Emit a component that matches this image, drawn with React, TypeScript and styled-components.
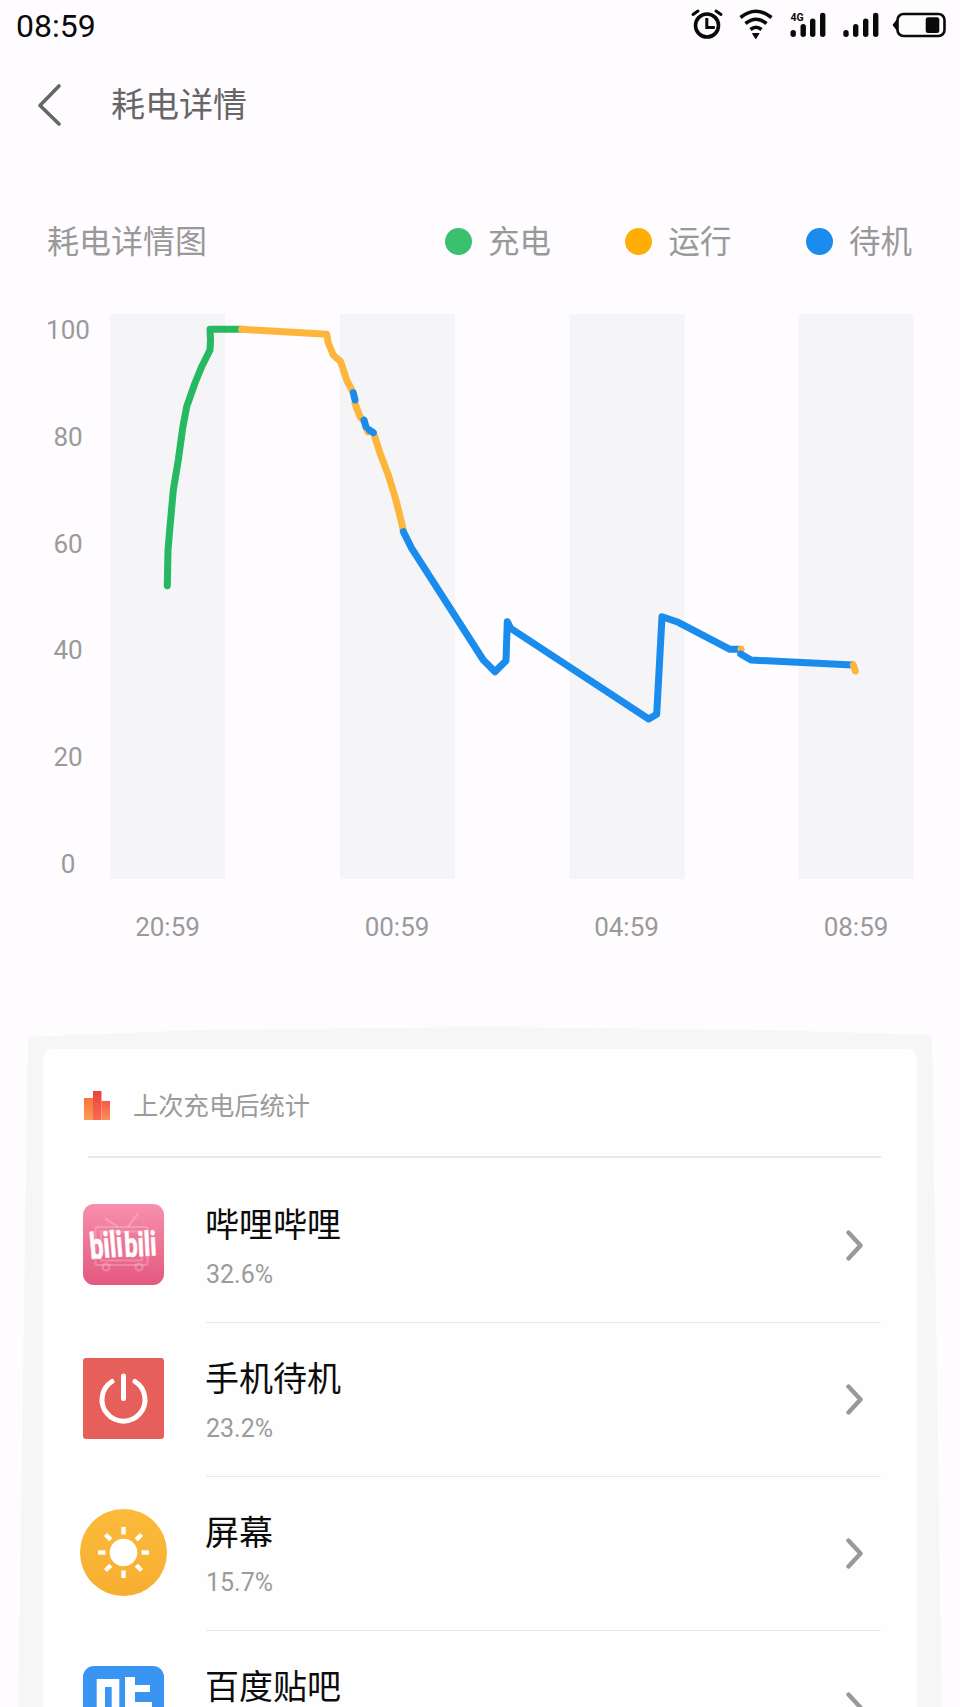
import React from 'react';
import styled, { createGlobalStyle } from 'styled-components';

const GREEN = '#27b862';
const ORANGE = '#fdb53c';
const BLUE = '#1a8ced';

const GlobalStyle = createGlobalStyle`
  html, body {
    margin: 0;
    padding: 0;
    background: #fefcfe;
    font-family: Roboto, "Noto Sans CJK SC", sans-serif;
  }
`;

const Page = styled.div`
  width: 960px;
  height: 1707px;
  overflow: hidden;
  background: #fefcfe;
`;

const StatusBar = styled.div`
  height: 50px;
  display: flex;
  align-items: center;
  justify-content: space-between;
  padding-left: 16px;
`;

const Clock = styled.span`
  font-size: 32px;
  line-height: 50px;
  padding-top: 1px;
  color: #0a0a0a;
`;

const TitleBar = styled.div`
  height: 110px;
  display: flex;
  align-items: center;
  padding-left: 36px;
`;

const BackIcon = styled.svg`
  width: 28px;
  height: 44px;
`;

const Title = styled.h1`
  margin: 0 0 6px 47px;
  font-size: 34px;
  font-weight: 400;
  color: #666;
`;

const ChartHeader = styled.div`
  height: 50px;
  margin-top: 56px;
  padding: 0 48px 0 47px;
  display: flex;
  align-items: center;
  justify-content: space-between;
`;

const ChartTitle = styled.span`
  font-size: 32px;
  margin-bottom: 4px;
  color: #999;
`;

const Legend = styled.div`
  display: flex;
  gap: 74.5px;
`;

const LegendItem = styled.div`
  display: flex;
  align-items: center;
  gap: 16px;
`;

const LegendText = styled.span`
  font-size: 31.5px;
  margin-bottom: 4px;
  color: #999;
`;

const Dot = styled.i<{ $color: string }>`
  width: 27px;
  height: 27px;
  border-radius: 50%;
  background: ${(p) => p.$color};
`;

const ChartRow = styled.div`
  margin-top: 48px;
  height: 565px;
  display: flex;
  padding-left: 40px;
`;

const YAxis = styled.div`
  width: 56px;
  margin: 1px 14px 0 0;
  display: flex;
  flex-direction: column;
  justify-content: space-between;
  align-items: center;
`;

const AxisLabel = styled.span`
  font-size: 26px;
  line-height: 30px;
  color: #9a9a9a;
`;

const Plot = styled.svg`
  width: 804px;
  height: 565px;
  display: block;
`;

const XAxis = styled.div`
  margin-top: 33px;
  padding-left: 110px;
  display: flex;
  gap: 114.5px;
`;

const XLabel = styled(AxisLabel)`
  width: 115px;
  text-align: center;
`;

const Halo = styled.section`
  margin-top: 85px;
  height: 680px;
  padding-top: 22px;
  background: #f6f6f6;
  clip-path: polygon(28px 10px, 200px 3px, 480px 0, 760px 3px, 932px 8px, 942px 100%, 18px 100%);
`;

const Card = styled.div`
  margin: 0 43px;
  height: 700px;
  background: #fefefe;
  border-radius: 11px 11px 0 0;
`;

const CardHeader = styled.div`
  height: 101px;
  padding: 6px 0 0 41px;
  display: flex;
  align-items: center;
  gap: 23px;
`;

const CardHeaderText = styled.span`
  font-size: 25.3px;
  margin-bottom: 4px;
  color: #9b9b9b;
`;

const HeaderRule = styled.div`
  height: 1.5px;
  margin: 0 36px 0 45px;
  background: #e8e8e8;
`;

const List = styled.div`
  padding-top: 11px;
`;

const Row = styled.div`
  height: 154px;
  display: flex;
  align-items: center;
  padding-left: 40px;
`;

const IconSlot = styled.div`
  width: 81px;
  height: 81px;
  margin-bottom: 2px;
  flex-shrink: 0;
  display: flex;
  align-items: center;
  justify-content: center;
`;

const RowBody = styled.div`
  flex: 1;
  align-self: stretch;
  margin: 0 36px 0 42px;
  padding-right: 18px;
  display: flex;
  align-items: center;
  justify-content: space-between;
  border-bottom: 1.5px solid #e8e8e8;
`;

const RowText = styled.div`
  padding-top: 2px;
  display: flex;
  flex-direction: column;
  gap: 13px;
`;

const AppName = styled.span`
  margin-left: -1px;
  font-size: 34px;
  line-height: 44px;
  color: #0c0c0c;
`;

const Percent = styled.span`
  height: 30px;
  font-size: 25px;
  line-height: 30px;
  color: #9b9b9b;
`;

const Chevron = styled.svg`
  width: 17px;
  height: 31px;
`;

type Segment = { color: string; points: number[][] };

const segments: Segment[] = [
  { color: GREEN, points: [[167.3, 585.7], [168, 550], [170, 526.7], [173.3, 490], [178.3, 460], [182.7, 428], [186.7, 406.7], [195, 383], [199.5, 372], [201.7, 366.7], [210, 350], [210.5, 340], [210, 329.3], [241.7, 329.3]] },
  { color: ORANGE, points: [[241.7, 329.3], [326.7, 334.3], [328.3, 343], [333.3, 355], [340.7, 361.7], [346.7, 380], [352.7, 391.7]] },
  { color: ORANGE, points: [[355, 403.3], [360, 416.7], [364, 421]] },
  { color: ORANGE, points: [[366, 427], [368, 432]] },
  { color: ORANGE, points: [[374, 434.3], [380, 453.3], [388.3, 475], [395, 496.7], [399.3, 513.3], [403.3, 530]] },
  { color: BLUE, points: [[353.3, 392.7], [355, 400]] },
  { color: BLUE, points: [[364, 420], [366, 426.7]] },
  { color: BLUE, points: [[369.3, 430], [373.3, 432.7]] },
  { color: BLUE, points: [[403.3, 531.7], [411.7, 548.3], [483.3, 660], [495, 671.7], [506, 660.7], [507.3, 621.7], [510.7, 628.3], [648.7, 719], [656.7, 714.3], [662, 616.7], [678.3, 622.3], [730, 649.3], [740, 649.3]] },
  { color: ORANGE, points: [[741, 649.3], [741.2, 649.3]] },
  { color: BLUE, points: [[740.7, 654], [751, 660], [852.7, 665]] },
  { color: ORANGE, points: [[853.3, 665], [855.3, 671]] },
];

const yLabels = [100, 80, 60, 40, 20, 0];
const xLabels = ['20:59', '00:59', '04:59', '08:59'];
const bands = [110, 340, 569.5, 798.5];

const StatusIcons = () => (
  <svg width="300" height="50" viewBox="660 0 300 50">
    <circle cx="707" cy="25.5" r="11.5" fill="none" stroke="#0a0a0a" strokeWidth="3.6" />
    <path d="M706.8 18v9.6h8" fill="none" stroke="#0a0a0a" strokeWidth="3" />
    <path d="M693 14.5l5-3.5M721 14.5l-5-3.5" fill="none" stroke="#0a0a0a" strokeWidth="3" strokeLinecap="round" />
    <g fill="none" stroke="#0a0a0a" strokeWidth="3.6">
      <path d="M740.5 17.5Q756 5 771.5 17.5" />
      <path d="M745.5 23.5Q756 15 766.5 23.5" />
      <path d="M750.5 29.5Q756 25 761.5 29.5" />
    </g>
    <path d="M752.5 33.5h6.5l-3.2 5.2z" fill="#0a0a0a" stroke="#0a0a0a" strokeLinejoin="round" />
    <text x="790.5" y="20.5" fontFamily="Roboto, sans-serif" fontSize="10.5" fontWeight="700" fill="#0a0a0a">4G</text>
    <g fill="#0a0a0a">
      <rect x="790.5" y="30" width="5.4" height="7" rx="2.7" />
      <rect x="800.5" y="24" width="5.4" height="13" rx="2.7" />
      <rect x="810" y="18.5" width="5.4" height="18.5" rx="2.7" />
      <rect x="820" y="12.7" width="5.4" height="24.3" rx="2.7" />
      <rect x="843.3" y="30" width="5.4" height="7" rx="2.7" />
      <rect x="853" y="24" width="5.4" height="13" rx="2.7" />
      <rect x="863" y="18.5" width="5.4" height="18.5" rx="2.7" />
      <rect x="873" y="12.7" width="5.4" height="24.3" rx="2.7" />
    </g>
    <rect x="897.5" y="14" width="47" height="22" rx="6" fill="none" stroke="#0a0a0a" strokeWidth="2.6" />
    <path d="M897 20.5l-3.6 4.5 3.6 4.5z" fill="#0a0a0a" stroke="#0a0a0a" strokeWidth="1.5" strokeLinejoin="round" />
    <rect x="925.7" y="17.3" width="13.6" height="15.6" rx="2.5" fill="#0a0a0a" />
  </svg>
);

const StatsIcon = () => (
  <svg width="26" height="29" viewBox="0 0 26 29">
    <defs>
      <linearGradient id="statsLeft" x1="0" y1="0" x2="0" y2="1">
        <stop offset="0" stopColor="#f9713f" />
        <stop offset="1" stopColor="#fd9b58" />
      </linearGradient>
      <linearGradient id="statsMid" x1="0" y1="0" x2="0" y2="1">
        <stop offset="0" stopColor="#e8453f" />
        <stop offset="1" stopColor="#fb6a4e" />
      </linearGradient>
      <linearGradient id="statsRight" x1="0" y1="0" x2="0" y2="1">
        <stop offset="0" stopColor="#f8594a" />
        <stop offset="1" stopColor="#fd8f57" />
      </linearGradient>
    </defs>
    <rect x="0" y="7" width="9" height="22" fill="url(#statsLeft)" />
    <rect x="9" y="0" width="8.5" height="29" fill="url(#statsMid)" />
    <rect x="17.5" y="10" width="8.5" height="19" fill="url(#statsRight)" />
  </svg>
);

const BiliIcon = () => (
  <svg width="81" height="81" viewBox="0 0 81 81">
    <defs>
      <linearGradient id="biliBg" x1="0" y1="0" x2="0" y2="1">
        <stop offset="0" stopColor="#f88fac" />
        <stop offset="1" stopColor="#e4587f" />
      </linearGradient>
    </defs>
    <rect width="81" height="81" rx="11" fill="url(#biliBg)" />
    <g fill="none" stroke="#fff" strokeOpacity="0.22" strokeWidth="2.2">
      <rect x="12.5" y="23" width="52" height="38" rx="2" />
      <rect x="18" y="27.5" width="41" height="29" />
      <path d="M22 14.5l13 8.2M55 9.5l-10 13.2" />
      <circle cx="23" cy="63" r="3.5" />
      <circle cx="56" cy="63" r="3.5" />
    </g>
    <g fill="#fff" stroke="#fff" strokeWidth="0.7" fontFamily="Roboto, sans-serif" fontWeight="700">
      <text x="7.5" y="55" fontSize="36" textLength="33" lengthAdjust="spacingAndGlyphs" transform="rotate(-5 8 53)">bili</text>
      <text x="42" y="53" fontSize="34" textLength="32" lengthAdjust="spacingAndGlyphs" transform="rotate(-3 41 52)">bili</text>
    </g>
  </svg>
);

const PowerIcon = () => (
  <svg width="81" height="81" viewBox="0 0 81 81">
    <rect width="81" height="81" rx="3" fill="#e75f5b" />
    <path d="M29 23.5a21.5 21.5 0 1 0 23 0" fill="none" stroke="#fff" strokeWidth="5" strokeLinecap="round" />
    <path d="M40.5 18v22.5" fill="none" stroke="#fff" strokeWidth="5" strokeLinecap="round" />
  </svg>
);

const SunIcon = () => (
  <svg width="87" height="87" viewBox="0 0 87 87" style={{ flexShrink: 0 }}>
    <defs>
      <linearGradient id="sunBg" x1="0" y1="0" x2="0" y2="1">
        <stop offset="0" stopColor="#fbbb3b" />
        <stop offset="1" stopColor="#f7ae30" />
      </linearGradient>
    </defs>
    <circle cx="43.5" cy="43.5" r="43.5" fill="url(#sunBg)" />
    <circle cx="43.5" cy="43.5" r="13.8" fill="#fff" />
    <g stroke="#fff" strokeWidth="4.4" strokeLinecap="butt">
      {[0, 45, 90, 135, 180, 225, 270, 315].map((a) => (
        <path key={a} d="M43.5 25.5v-7.5" transform={`rotate(${a} 43.5 43.5)`} />
      ))}
    </g>
  </svg>
);

const TiebaIcon = () => (
  <svg width="81" height="81" viewBox="0 0 81 81">
    <rect width="81" height="81" rx="11" fill="#3a95f2" />
    <path fillRule="evenodd" d="M13.7 13h22.6v40H13.7zM22 21v26h6.7V21z" fill="#fff" />
    <path d="M42 11h10v8h15v7H52v10h17v30H42z" fill="#fff" />
  </svg>
);

const rows = [
  { name: '哔哩哔哩', percent: '32.6%', icon: <BiliIcon /> },
  { name: '手机待机', percent: '23.2%', icon: <PowerIcon /> },
  { name: '屏幕', percent: '15.7%', icon: <SunIcon /> },
  { name: '百度贴吧', percent: '', icon: <TiebaIcon /> },
];

export default function App() {
  return (
    <Page>
      <GlobalStyle />
      <StatusBar>
        <Clock>08:59</Clock>
        <StatusIcons />
      </StatusBar>
      <TitleBar>
        <BackIcon viewBox="0 0 28 44">
          <path d="M23 3L4 22.5 23 41" fill="none" stroke="#666" strokeWidth="3.6" strokeLinecap="round" strokeLinejoin="round" />
        </BackIcon>
        <Title>耗电详情</Title>
      </TitleBar>
      <ChartHeader>
        <ChartTitle>耗电详情图</ChartTitle>
        <Legend>
          <LegendItem><Dot $color="#3bc06f" /><LegendText>充电</LegendText></LegendItem>
          <LegendItem><Dot $color="#ffae06" /><LegendText>运行</LegendText></LegendItem>
          <LegendItem><Dot $color={BLUE} /><LegendText>待机</LegendText></LegendItem>
        </Legend>
      </ChartHeader>
      <ChartRow>
        <YAxis>
          {yLabels.map((v) => (
            <AxisLabel key={v}>{v}</AxisLabel>
          ))}
        </YAxis>
        <Plot viewBox="110 314 804 565">
          {bands.map((x) => (
            <rect key={x} x={x} y="314" width="115" height="565" fill="#f5f4f6" />
          ))}
          {segments.map((s, i) => (
            <polyline
              key={i}
              points={s.points.map((p) => p.join(',')).join(' ')}
              fill="none"
              stroke={s.color}
              strokeWidth="7"
              strokeLinecap="round"
              strokeLinejoin="round"
            />
          ))}
        </Plot>
      </ChartRow>
      <XAxis>
        {xLabels.map((t) => (
          <XLabel key={t}>{t}</XLabel>
        ))}
      </XAxis>
      <Halo>
        <Card>
          <CardHeader>
            <StatsIcon />
            <CardHeaderText>上次充电后统计</CardHeaderText>
          </CardHeader>
          <HeaderRule />
          <List>
            {rows.map((r) => (
              <Row key={r.name}>
                <IconSlot>{r.icon}</IconSlot>
                <RowBody>
                  <RowText>
                    <AppName>{r.name}</AppName>
                    <Percent>{r.percent}</Percent>
                  </RowText>
                  <Chevron viewBox="0 0 17 31">
                    <path d="M2.5 2.5L14.5 15.5 2.5 28.5" fill="none" stroke="#999" strokeWidth="4.4" strokeLinecap="round" strokeLinejoin="round" />
                  </Chevron>
                </RowBody>
              </Row>
            ))}
          </List>
        </Card>
      </Halo>
    </Page>
  );
}
